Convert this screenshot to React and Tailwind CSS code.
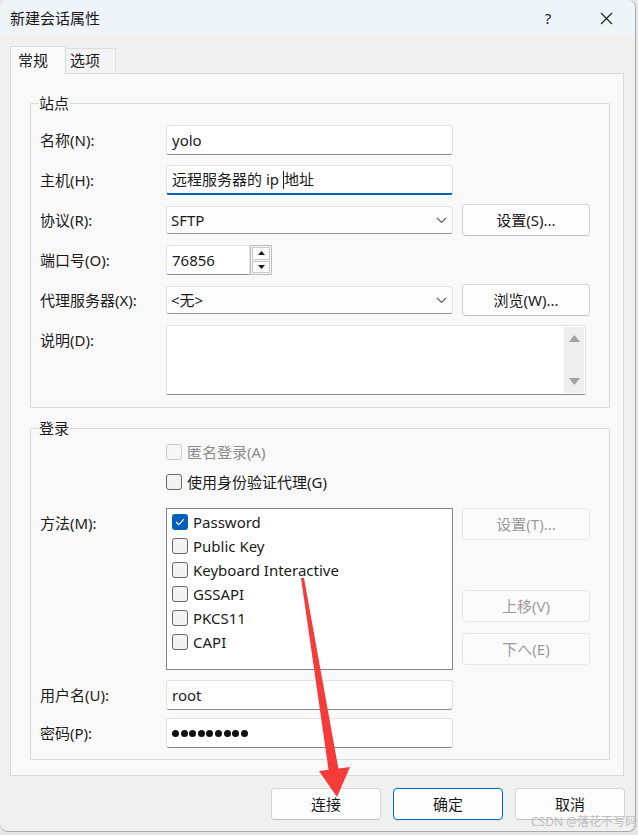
import React from 'react';

const rowLabel = 'w-[126px] shrink-0 text-[15px] text-[#1b1b1b]';

function Chevron() {
  return (
    <svg width="11" height="7" viewBox="0 0 11 7" className="shrink-0">
      <polyline points="1,1 5.5,5.5 10,1" fill="none" stroke="#606060" strokeWidth="1.1" />
    </svg>
  );
}

function TextBox({ children, focused = false, className = '' }) {
  return (
    <div
      className={`h-full w-[287px] bg-white rounded-[3px] border border-[#e3e3e3] flex items-center pl-[5px] text-[15px] text-[#1a1a1a] ${
        focused ? 'border-b-2 border-b-[#005fb8]' : 'border-b-[#8a8a8a]'
      } ${className}`}
    >
      {children}
    </div>
  );
}

function Select({ value }) {
  return (
    <div className="h-[28px] w-[287px] bg-[#fdfdfd] rounded-[3px] border border-[#e3e3e3] border-b-[#9a9a9a] flex items-center justify-between pl-[4px] pr-[5px] text-[15px] text-[#1a1a1a]">
      <span>{value}</span>
      <Chevron />
    </div>
  );
}

function Btn({ children, disabled = false, primary = false, className = '' }) {
  return (
    <div
      className={`h-[32px] rounded-[4px] border flex items-center justify-center text-[15px] ${
        disabled
          ? 'bg-[#fbfbfb] border-[#e6e6e6] text-[#9b9b9b]'
          : primary
          ? 'bg-[#fdfdfd] border-[#0067c0] text-[#1a1a1a]'
          : 'bg-[#fdfdfd] border-[#d5d5d5] border-b-[#c0c0c0] text-[#1a1a1a]'
      } ${className}`}
    >
      {children}
    </div>
  );
}

function Check({ checked = false, disabled = false }) {
  if (checked) {
    return (
      <div className="w-[16px] h-[16px] rounded-[3px] bg-[#005fb8] flex items-center justify-center shrink-0">
        <svg width="10" height="8" viewBox="0 0 10 8">
          <polyline points="1,4 3.8,6.6 9,1.2" fill="none" stroke="#ffffff" strokeWidth="1.2" />
        </svg>
      </div>
    );
  }
  return (
    <div
      className={`w-[16px] h-[16px] rounded-[3px] border shrink-0 ${
        disabled ? 'border-[#c8c8c8] bg-[#f7f7f7]' : 'border-[#666666] bg-[#f3f3f3]'
      }`}
    />
  );
}

function Group({ title, children, className = '' }) {
  return (
    <fieldset className={`w-[580px] border border-[#dadada] ${className}`}>
      <legend className="ml-[7px] px-px text-[15px] leading-[20px] text-[#1a1a1a]">{title}</legend>
      <div className="pl-[9px]">{children}</div>
    </fieldset>
  );
}

const methods = [
  { label: 'Password', checked: true },
  { label: 'Public Key' },
  { label: 'Keyboard Interactive' },
  { label: 'GSSAPI' },
  { label: 'PKCS11' },
  { label: 'CAPI' },
];

export default function App() {
  return (
    <div className="relative w-[638px] h-[835px] bg-[#e6e6e6] overflow-hidden font-['Noto_Sans','Noto_Sans_CJK_SC',sans-serif]">
      <div className="w-[636px] h-[832px] bg-[#f0f0f0] rounded-lg border-r border-b border-[#a9a9a9] flex flex-col">
        {/* title bar */}
        <div className="h-[36px] shrink-0 bg-[#eff4f9] rounded-t-lg flex items-center pl-[10px]">
          <span className="text-[15px] text-[#1a1a1a] flex-1">新建会话属性</span>
          <div className="w-[46px] h-full flex items-center justify-center text-[15px] text-[#1a1a1a]">?</div>
          <div className="w-[12px]" />
          <div className="w-[46px] h-full flex items-center justify-center mr-[6px]">
            <svg width="13" height="13" viewBox="0 0 13 13">
              <path d="M1 1 L12 12 M12 1 L1 12" stroke="#1a1a1a" strokeWidth="1.1" />
            </svg>
          </div>
        </div>

        <div className="pl-[10px] pr-[12px] pt-[10px]">
          {/* tabs */}
          <div className="flex items-end h-[27px]">
            <div className="relative z-10 -mb-px h-[28px] w-[56px] bg-[#f9f9f9] border border-b-0 border-[#d9d9d9] pl-[7px] pt-[2px] text-[15px] text-[#1a1a1a]">
              常规
            </div>
            <div className="h-[25px] w-[50px] bg-[#f4f4f4] border border-l-0 border-b-0 border-[#dddddd] pl-[4px] text-[15px] text-[#1a1a1a]">
              选项
            </div>
          </div>

          {/* panel */}
          <div className="w-[614px] bg-[#f9f9f9] border border-[#d9d9d9] pl-[19px] pt-[19px] pb-[15px]">
            <Group title="站点">
              <div className="pt-[12px] pb-[12px] flex flex-col gap-[10px]">
                <div className="h-[30px] flex items-center">
                  <span className={rowLabel}>名称(N):</span>
                  <TextBox>yolo</TextBox>
                </div>
                <div className="h-[30px] flex items-center">
                  <span className={rowLabel}>主机(H):</span>
                  <TextBox focused>
                    <span className="flex items-center whitespace-pre">
                      {'远程服务器的 ip '}
                      <span className="inline-block w-px h-[18px] bg-[#1a1a1a]" />
                      地址
                    </span>
                  </TextBox>
                </div>
                <div className="h-[30px] flex items-center">
                  <span className={rowLabel}>协议(R):</span>
                  <Select value="SFTP" />
                  <Btn className="w-[128px] ml-[9px]">设置(S)...</Btn>
                </div>
                <div className="h-[30px] flex items-center">
                  <span className={rowLabel}>端口号(O):</span>
                  <div className="h-[30px] w-[84px] bg-white rounded-l-[3px] border border-[#e3e3e3] border-b-[#8a8a8a] flex items-center pl-[5px] text-[15px] text-[#1a1a1a]">
                    76856
                  </div>
                  <div className="h-[30px] w-[22px] border border-[#bcbcbc] bg-[#f6f6f6] flex flex-col p-px gap-px">
                    <div className="flex-1 border border-[#c9c9c9] bg-[#fbfbfb] flex items-center justify-center">
                      <svg width="7" height="4" viewBox="0 0 7 4">
                        <polygon points="0,4 3.5,0 7,4" fill="#1a1a1a" />
                      </svg>
                    </div>
                    <div className="flex-1 border border-[#c9c9c9] bg-[#fbfbfb] flex items-center justify-center">
                      <svg width="7" height="4" viewBox="0 0 7 4">
                        <polygon points="0,0 3.5,4 7,0" fill="#1a1a1a" />
                      </svg>
                    </div>
                  </div>
                </div>
                <div className="h-[30px] flex items-center">
                  <span className={rowLabel}>代理服务器(X):</span>
                  <Select value="<无>" />
                  <Btn className="w-[128px] ml-[9px]">浏览(W)...</Btn>
                </div>
                <div className="flex items-start">
                  <span className={`${rowLabel} pt-[4px]`}>说明(D):</span>
                  <div className="h-[70px] w-[420px] bg-white border border-[#e3e3e3] border-b-[#8a8a8a] rounded-[2px] flex justify-end p-px">
                    <div className="w-[20px] h-full bg-[#eeeeee] flex flex-col items-center justify-between py-[8px]">
                      <svg width="11" height="7" viewBox="0 0 11 7">
                        <polygon points="0,7 5.5,0 11,7" fill="#a3a3a3" />
                      </svg>
                      <svg width="11" height="7" viewBox="0 0 11 7">
                        <polygon points="0,0 5.5,7 11,0" fill="#a3a3a3" />
                      </svg>
                    </div>
                  </div>
                </div>
              </div>
            </Group>

            <Group title="登录" className="mt-[10px]">
              <div className="pt-[2px] pb-[11px] flex flex-col">
                <div className="h-[24px] flex items-center">
                  <span className="w-[126px] shrink-0" />
                  <Check disabled />
                  <span className="ml-[5px] text-[15px] text-[#8a8a8a]">匿名登录(A)</span>
                </div>
                <div className="h-[24px] mt-[6px] flex items-center">
                  <span className="w-[126px] shrink-0" />
                  <Check />
                  <span className="ml-[5px] text-[15px] text-[#1a1a1a]">使用身份验证代理(G)</span>
                </div>
                <div className="mt-[14px] flex items-start">
                  <span className={`${rowLabel} pt-[4px]`}>方法(M):</span>
                  <div className="h-[162px] w-[287px] bg-white border border-[#85868c] pl-[5px] pt-[1px] flex flex-col">
                    {methods.map((m) => (
                      <div key={m.label} className="h-[24px] flex items-center gap-[5px]">
                        <Check checked={m.checked} />
                        <span className="text-[15px] text-[#1a1a1a]">{m.label}</span>
                      </div>
                    ))}
                  </div>
                  <div className="ml-[9px] flex flex-col">
                    <Btn disabled className="w-[128px]">设置(T)...</Btn>
                    <Btn disabled className="w-[128px] mt-[50px]">上移(V)</Btn>
                    <Btn disabled className="w-[128px] mt-[11px]">下へ(E)</Btn>
                  </div>
                </div>
                <div className="h-[30px] mt-[10px] flex items-center">
                  <span className={rowLabel}>用户名(U):</span>
                  <TextBox>root</TextBox>
                </div>
                <div className="h-[30px] mt-[8px] flex items-center">
                  <span className={rowLabel}>密码(P):</span>
                  <TextBox>
                    <span className="flex items-center gap-[1.6px]">
                      {Array.from({ length: 9 }).map((_, i) => (
                        <span key={i} className="w-[7px] h-[7px] rounded-full bg-[#111111]" />
                      ))}
                    </span>
                  </TextBox>
                </div>
              </div>
            </Group>
          </div>
        </div>

        {/* bottom buttons */}
        <div className="mt-[12px] flex justify-end gap-[12px] pr-[10px]">
          <Btn className="w-[110px]">连接</Btn>
          <Btn primary className="w-[110px]">确定</Btn>
          <Btn className="w-[110px]">取消</Btn>
        </div>
      </div>

      {/* annotation arrow */}
      <svg className="absolute left-0 top-0 pointer-events-none" width="638" height="835" viewBox="0 0 638 835">
        <polygon points="301,578 304,578 339,772 329,773" fill="#f63b3b" />
        <polygon points="319,771 350,767 337,797" fill="#f63b3b" />
      </svg>

      <div className="absolute left-[531px] top-[814px] text-[12px] leading-[16px] text-[#bdbdbd] pointer-events-none">
        CSDN @落花不写码
      </div>
    </div>
  );
}
